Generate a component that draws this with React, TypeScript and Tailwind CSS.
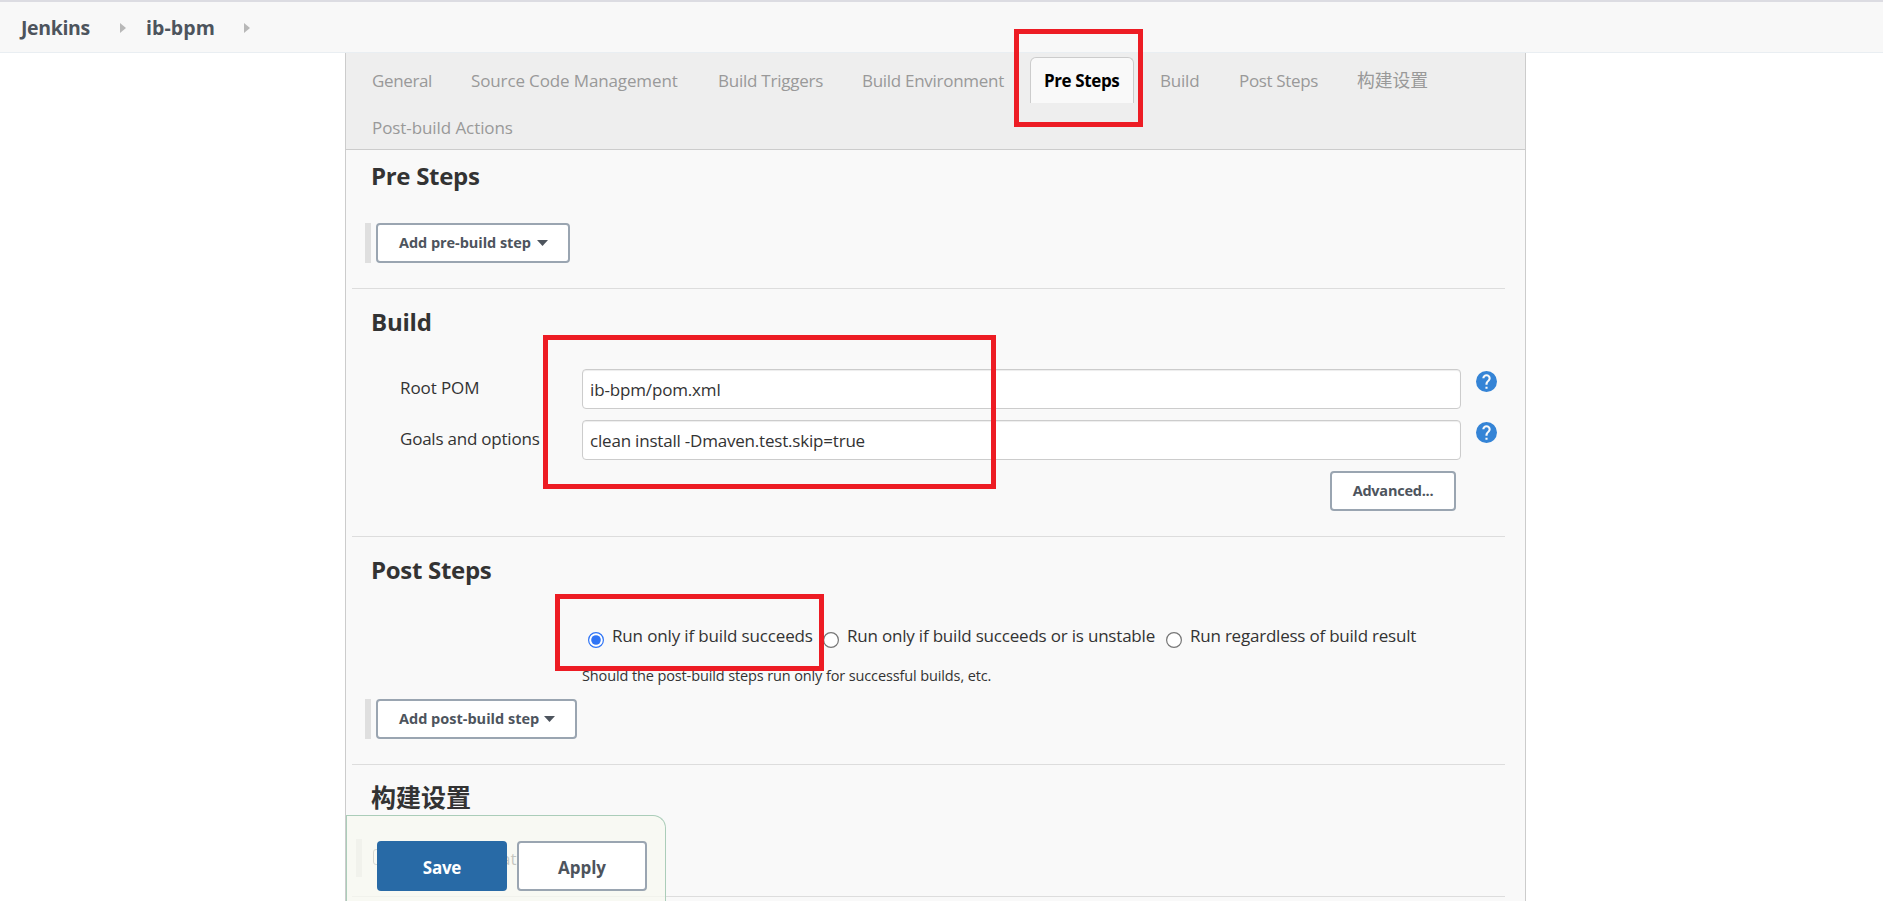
import React from "react";

const tabs = [
  { name: "General", box: "w-[99px]", text: "tracking-[-0.37px]" },
  { name: "Source Code Management", box: "w-[247px]", text: "tracking-[-0.13px]" },
  { name: "Build Triggers", box: "w-[144px]", text: "tracking-[-0.24px]" },
  { name: "Build Environment", box: "w-[182px]", text: "tracking-[-0.29px]" },
  { name: "Pre Steps", box: "w-[116px]", text: "tracking-[-0.39px]", active: true },
  { name: "Build", box: "w-[79px]", text: "tracking-[-0.2px]" },
  { name: "Post Steps", box: "w-[118px]", text: "tracking-[-0.35px]" },
  { name: "构建设置", box: "w-[111px]", text: "text-[17.8px]" },
  { name: "Post-build Actions", box: "w-[200px]", text: "tracking-[-0.08px]" },
];

function Crumb({ label, className }: { label: string; className: string }) {
  return (
    <div className="flex items-center">
      <span className={`text-[19.5px] leading-[27px] font-bold whitespace-nowrap text-[#4d545d] ${className}`}>{label}</span>
      <svg width="6" height="10" viewBox="0 0 6 10" className="ml-[30px]">
        <path d="M0 0 L6 5 L0 10 Z" fill="#b8b8b8" />
      </svg>
    </div>
  );
}

function Heading({ children, className = "" }: { children: React.ReactNode; className?: string }) {
  return <h2 className={`ml-[19px] h-[31px] leading-[31px] font-bold whitespace-nowrap text-[#333] ${className}`}>{children}</h2>;
}

function StepButton({ label, className, text }: { label: string; className: string; text: string }) {
  return (
    <div className="ml-[13px] flex h-10 gap-[5px]">
      <div className="w-[6px] bg-[#dfdfdf]" />
      <button className={`flex items-center rounded-[4px] border-2 border-[#9aa5b1] bg-white pl-[21px] text-[14.5px] leading-5 font-bold whitespace-nowrap text-[#4d545d] ${className}`}>
        <span className={text}>{label}</span>
        <svg width="11" height="6" viewBox="0 0 11 6" className="shrink-0">
          <path d="M0 0 H11 L5.5 6 Z" fill="#4d545d" />
        </svg>
      </button>
    </div>
  );
}

function Help() {
  return (
    <svg width="21" height="21" viewBox="0.5 0.5 23 23" className="mt-[2px] ml-[15px] shrink-0">
      <path
        fill="#3584d6"
        d="M12 .5a11.5 11.5 0 1 0 0 23 11.5 11.5 0 0 0 0-23zm1.15 19.55h-2.3v-2.3h2.3v2.3zm2.38-8.91-1.03 1.06c-.83.84-1.35 1.53-1.35 3.25h-2.3v-.57c0-1.27.52-2.42 1.35-3.25l1.43-1.45c.42-.41.67-.99.67-1.62a2.3 2.3 0 0 0-4.6 0H7.4a4.6 4.6 0 0 1 9.2 0c0 1.01-.41 1.93-1.07 2.58z"
      />
    </svg>
  );
}

function Field({ label, value, labelClass, valueClass }: { label: string; value: string; labelClass: string; valueClass: string }) {
  return (
    <div className="flex h-10">
      <label className={`ml-12 w-[182px] shrink-0 pt-[7px] text-[17px] leading-[23px] whitespace-nowrap ${labelClass}`}>{label}</label>
      <div className="w-[879px] shrink-0 rounded-[4px] border border-[#ccc] bg-white pt-[8px] pl-[7px] shadow-[inset_0_1px_1px_rgba(0,0,0,0.075)]">
        <span className={`block text-[17px] leading-[23px] ${valueClass}`}>{value}</span>
      </div>
      <Help />
    </div>
  );
}

function Radio({ label, checked, className, text }: { label: string; checked?: boolean; className: string; text: string }) {
  return (
    <label className={`flex shrink-0 ${className}`}>
      <svg width="16" height="16" viewBox="0 0 16 16" className="mt-[9px] mr-[8px] shrink-0">
        <circle cx="8" cy="8" r="7.4" fill="#fff" stroke={checked ? "#2f74f5" : "#767676"} strokeWidth="1.2" />
        {checked && <circle cx="8" cy="8" r="4.8" fill="#2f74f5" />}
      </svg>
      <span className={`pt-px text-[17px] leading-[23px] whitespace-nowrap ${text}`}>{label}</span>
    </label>
  );
}

export default function App() {
  return (
    <div className="relative flex h-[901px] w-[1883px] flex-col overflow-hidden bg-white font-['Open_Sans','Noto_Sans_CJK_SC',sans-serif] text-[#333]">
      <header className="flex h-[53px] shrink-0 items-center border-t-2 border-b border-t-[#dcdce2] border-b-[#e9eef2] bg-[#f8f8f8] pt-px pl-[21px]">
        <Crumb label="Jenkins" className="w-[69px] tracking-[-0.35px]" />
        <div className="w-5" />
        <Crumb label="ib-bpm" className="w-[68px] tracking-[0.1px]" />
      </header>

      <main className="relative ml-[345px] flex h-[848px] w-[1181px] flex-col border-x border-[#ccc] bg-[#f9f9f9]">
        <nav className="flex h-[97px] shrink-0 flex-wrap content-start border-b border-[#ccc] bg-[#eee] pt-1 pl-[6px]">
          {tabs.map((t) =>
            t.active ? (
              <div key={t.name} className={`h-[47px] px-[6px] ${t.box}`}>
                <div className="h-[46px] rounded-t-[6px] border border-b-0 border-[#ccc] bg-[#f9f9f9] pl-[13px] text-[17px] leading-[45px] font-bold whitespace-nowrap text-black">
                  <span className={t.text}>{t.name}</span>
                </div>
              </div>
            ) : (
              <div key={t.name} className={`h-[47px] pt-px pl-5 text-[17px] leading-[45px] whitespace-nowrap text-[#999] ${t.box}`}>
                <span className={t.text}>{t.name}</span>
              </div>
            ),
          )}
        </nav>

        <div className="ml-[6px] w-[1153px]">
          <section className="h-[139px] border-b border-[#ddd] pt-[10px]">
            <Heading className="mb-8 text-[24px] tracking-[-0.3px]">Pre Steps</Heading>
            <StepButton label="Add pre-build step" className="w-[194px]" text="w-[138px] text-left tracking-[-0.05px]" />
          </section>

          <section className="h-[248px] border-b border-[#ddd] pt-[17px]">
            <Heading className="mb-8 text-[24px] tracking-[-0.2px]">Build</Heading>
            <div className="flex flex-col gap-[11px]">
              <Field label="Root POM" value="ib-bpm/pom.xml" labelClass="tracking-[-0.1px]" valueClass="tracking-[-0.15px]" />
              <Field label="Goals and options" value="clean install -Dmaven.test.skip=true" labelClass="tracking-[-0.22px]" valueClass="tracking-[-0.2px]" />
              <div className="flex justify-end pr-[49px]">
                <button className="h-10 w-[126px] rounded-[4px] border-2 border-[#9aa5b1] bg-white text-[14.5px] leading-5 font-bold tracking-[-0.24px] text-[#4d545d]">Advanced...</button>
              </div>
            </div>
          </section>

          <section className="h-[228px] border-b border-[#ddd] pt-[17px]">
            <Heading className="mb-[38px] text-[24px] tracking-[-0.3px]">Post Steps</Heading>
            <div className="ml-[236px] flex h-6">
              <Radio checked label="Run only if build succeeds" className="w-[235px]" text="tracking-[-0.15px]" />
              <Radio label="Run only if build succeeds or is unstable" className="w-[343px]" text="tracking-[-0.2px]" />
              <Radio label="Run regardless of build result" className="w-[260px]" text="tracking-[-0.22px]" />
            </div>
            <p className="mt-[19px] mb-[13px] ml-[230px] text-[14.5px] leading-5 whitespace-nowrap tracking-[-0.12px]">Should the post-build steps run only for successful builds, etc.</p>
            <StepButton label="Add post-build step" className="w-[201px]" text="w-[145px] text-left" />
          </section>

          <section className="h-[132px] border-b border-[#ddd] pt-[17px]">
            <Heading className="mb-[26px] text-[25px]">构建设置</Heading>
            <div className="ml-1 flex h-[38px]">
              <div className="w-[6px] bg-[#dfdfdf]" />
              <div className="mt-[10px] ml-[11px] h-4 w-4 rounded-[3px] border border-[#767676] bg-white" />
              <span className="ml-[112px] pt-2 text-[17px] leading-[23px]">at</span>
            </div>
          </section>
        </div>

        <div className="absolute bottom-0 left-0 flex h-[86px] w-[320px] gap-[10px] rounded-tr-[13px] border border-b-0 border-[#abcdb9] bg-[#f7f8f0]/75 pt-[25px] pl-[30px]">
          <button className="h-[50px] w-[130px] rounded-[4px] bg-[#286aa6] pt-[3px] text-[17px] leading-[23px] font-bold tracking-[-0.25px] text-white">Save</button>
          <button className="h-[50px] w-[130px] rounded-[4px] border-2 border-[#9aa5b1] bg-white pt-[3px] text-[17px] leading-[23px] font-bold text-[#4d545d]">Apply</button>
        </div>
      </main>

      <div className="absolute top-[29px] left-[1014px] h-[98px] w-[129px] border-5 border-[#ed1c24]" />
      <div className="absolute top-[335px] left-[543px] h-[154px] w-[453px] border-5 border-[#ed1c24]" />
      <div className="absolute top-[594px] left-[555px] h-[77px] w-[269px] border-5 border-[#ed1c24]" />
    </div>
  );
}
